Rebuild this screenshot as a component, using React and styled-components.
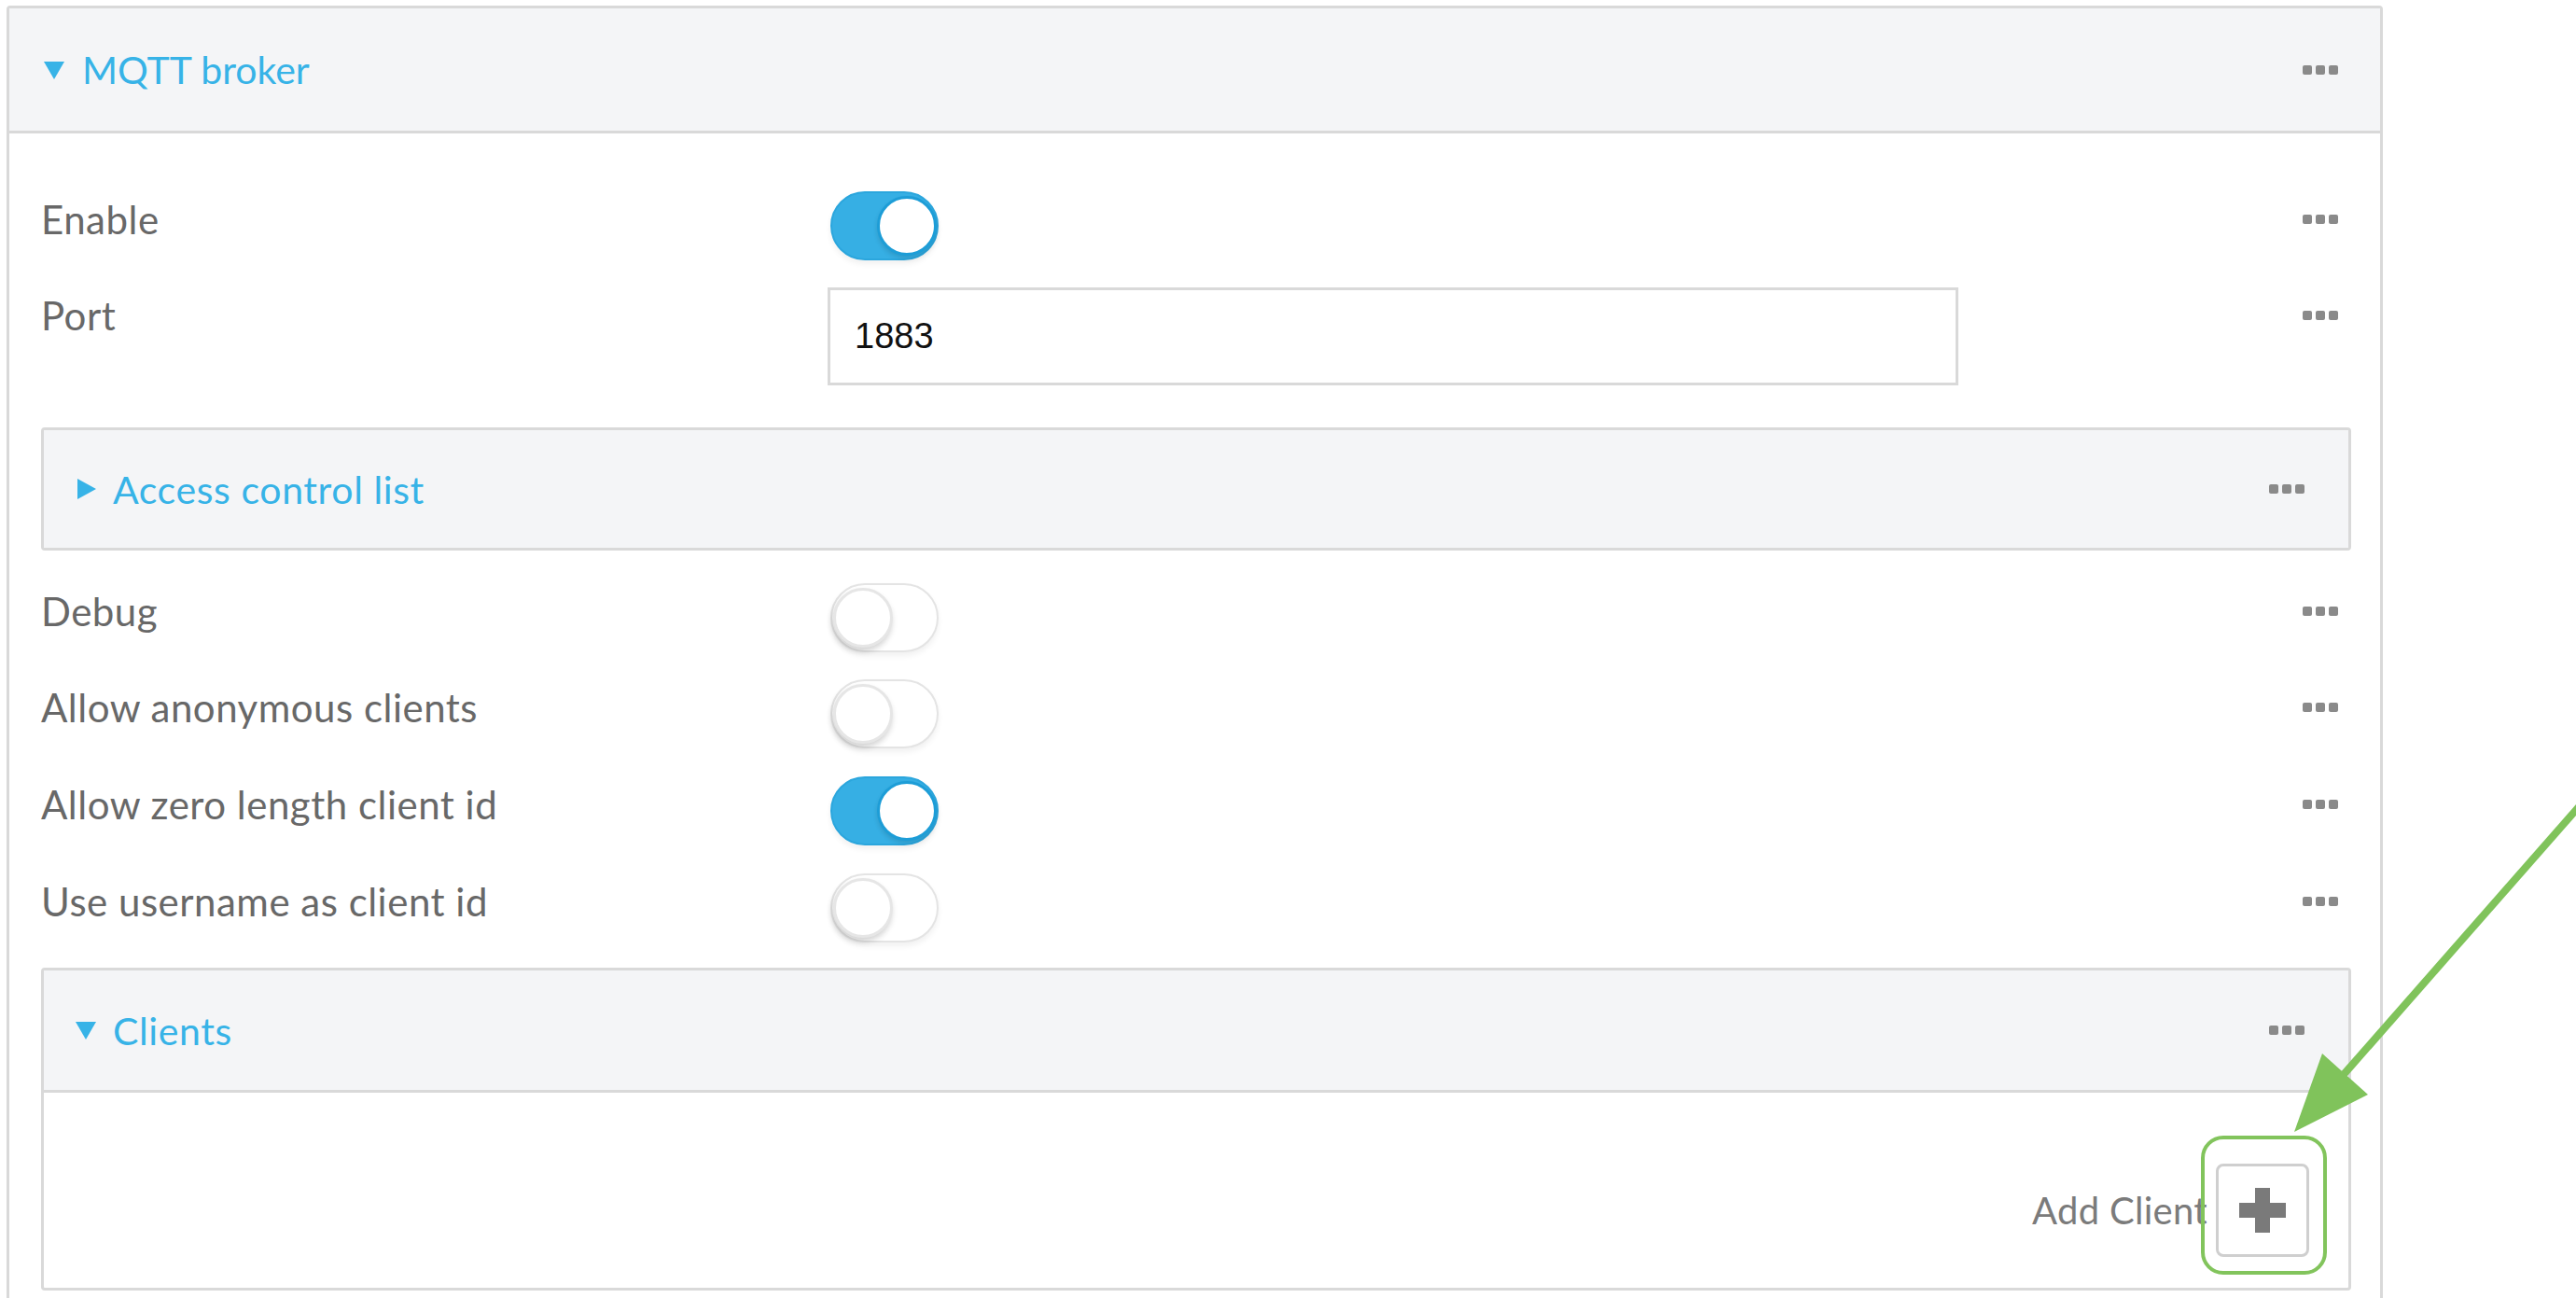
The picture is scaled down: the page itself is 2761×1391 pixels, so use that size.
import styled, { createGlobalStyle } from 'styled-components'

const GlobalStyle = createGlobalStyle`
  html, body {
    margin: 0;
    padding: 0;
    overflow: hidden;
    background: #ffffff;
    font-family: Lato, "Open Sans", sans-serif;
  }
`

const Page = styled.div`
  position: relative;
  width: 2761px;
  height: 1391px;
  padding: 6px 0 0 7px;
  box-sizing: border-box;
`

const Panel = styled.section`
  width: 2547px;
  box-sizing: border-box;
  border: 3px solid #d9d9d9;
  border-radius: 4px;
  background: #ffffff;
`

const PanelHeader = styled.div`
  display: flex;
  align-items: center;
  height: 131px;
  padding: 0 45px 0 37px;
  background: #f4f5f7;
  border-bottom: 3px solid #d9d9d9;
`

const Title = styled.span`
  flex: 1;
  display: flex;
  align-items: center;
  font-size: 41px;
  letter-spacing: ${(p) => (p.$tight ? 0 : 0.6)}px;
  color: #37b3e7;
`

const Caret = styled.svg`
  width: 22px;
  height: 22px;
  margin-right: ${(p) => p.$gap || 19}px;
  fill: #37b3e7;
  flex-shrink: 0;
`

const Body = styled.div`
  display: flex;
  flex-direction: column;
  padding: 62px 31px 60px 34px;
`

const Row = styled.div`
  display: flex;
  align-items: flex-start;
  padding-right: 14px;
  margin-top: ${(p) => p.$mt || 0}px;
`

const Label = styled.div`
  width: 843px;
  flex-shrink: 0;
  padding-top: 6px;
  font-size: 42px;
  letter-spacing: 0.5px;
  line-height: 48px;
  color: #686868;
`

const Control = styled.div`
  flex: 1;
`

const KebabWrap = styled.div`
  display: flex;
  align-items: center;
  gap: 4px;
  height: 48px;
  margin-top: ${(p) => (p.$inline ? 0 : 6)}px;
`

const Dot = styled.span`
  width: 10px;
  height: 10px;
  border-radius: 2px;
  background: #8a8a8a;
`

const Track = styled.div`
  position: relative;
  width: 116px;
  height: 74px;
  box-sizing: border-box;
  border-radius: 37px;
  margin-left: 3px;
  background: ${(p) => (p.$on ? '#36afe4' : '#ffffff')};
  border: 2px solid ${(p) => (p.$on ? '#2ba6dd' : '#e4e4e4')};
  box-shadow: 0 4px 6px rgba(0, 0, 0, 0.06);
`

const Knob = styled.div`
  position: absolute;
  top: 3px;
  left: ${(p) => (p.$on ? '48px' : '1px')};
  width: 64px;
  height: 64px;
  box-sizing: border-box;
  border-radius: 50%;
  background: #ffffff;
  border: 3px solid ${(p) => (p.$on ? '#1d9dd7' : '#e6e6e6')};
  box-shadow: ${(p) => (p.$on ? '0 3px 5px rgba(0,0,0,0.12)' : '-1px 4px 6px rgba(0,0,0,0.18)')};
`

const TextInput = styled.input`
  display: block;
  width: 1212px;
  height: 105px;
  box-sizing: border-box;
  border: 3px solid #d9d9d9;
  padding: 0 0 0 26px;
  font-family: "Liberation Sans", Arial, sans-serif;
  font-size: 38px;
  color: #111111;
  outline: none;
`

const SubPanel = styled.div`
  border: 3px solid #d9d9d9;
  border-radius: 4px;
  margin-top: ${(p) => p.$mt || 0}px;
  background: #ffffff;
`

const SubHeader = styled.div`
  display: flex;
  align-items: center;
  height: ${(p) => (p.$open ? 131 : 126)}px;
  box-sizing: border-box;
  padding: 0 47px 0 34px;
  background: #f4f5f7;
  border-bottom: ${(p) => (p.$open ? '3px solid #d9d9d9' : 'none')};
`

const SubBody = styled.div`
  display: flex;
  justify-content: flex-end;
  align-items: center;
  gap: 9px;
  padding: 76px 42px 33px 0;
`

const AddLabel = styled.span`
  font-size: 40px;
  letter-spacing: 0.3px;
  color: #7b7b7b;
`

const AddButton = styled.button`
  position: relative;
  display: flex;
  align-items: center;
  justify-content: center;
  width: 100px;
  height: 100px;
  padding: 0;
  box-sizing: border-box;
  border: 3px solid #cfcfcf;
  border-radius: 8px;
  background: #ffffff;
  cursor: pointer;
`

const Highlight = styled.span`
  position: absolute;
  top: -33px;
  left: -19px;
  right: -22px;
  bottom: -22px;
  border: 4px solid #82c45c;
  border-radius: 24px;
  pointer-events: none;
`

const Annotation = styled.svg`
  position: absolute;
  top: 0;
  left: 0;
  width: 2761px;
  height: 1391px;
  pointer-events: none;
`

function Kebab({ inline }) {
  return (
    <KebabWrap $inline={inline}>
      <Dot />
      <Dot />
      <Dot />
    </KebabWrap>
  )
}

function Down({ gap }) {
  return (
    <Caret viewBox="0 0 22 22" $gap={gap}>
      <polygon points="0,2 22,2 11,21" />
    </Caret>
  )
}

function Right({ gap }) {
  return (
    <Caret viewBox="0 0 22 22" $gap={gap}>
      <polygon points="2,0 22,11 2,22" />
    </Caret>
  )
}

function Toggle({ on }) {
  return (
    <Track $on={on}>
      <Knob $on={on} />
    </Track>
  )
}

function ToggleRow({ label, on, mt }) {
  return (
    <Row $mt={mt}>
      <Label>{label}</Label>
      <Control>
        <Toggle on={on} />
      </Control>
      <Kebab />
    </Row>
  )
}

export default function App() {
  return (
    <>
      <GlobalStyle />
      <Page>
        <Panel>
          <PanelHeader>
            <Title $tight>
              <Down gap={19} />
              MQTT broker
            </Title>
            <Kebab inline />
          </PanelHeader>
          <Body>
            <ToggleRow label="Enable" on />
            <Row $mt={29}>
              <Label>Port</Label>
              <Control>
                <TextInput defaultValue="1883" />
              </Control>
              <Kebab />
            </Row>
            <SubPanel $mt={45}>
              <SubHeader>
                <Title>
                  <Right gap={18} />
                  Access control list
                </Title>
                <Kebab inline />
              </SubHeader>
            </SubPanel>
            <ToggleRow label="Debug" mt={35} />
            <ToggleRow label="Allow anonymous clients" mt={29} />
            <ToggleRow label="Allow zero length client id" on mt={30} />
            <ToggleRow label="Use username as client id" mt={30} />
            <SubPanel $mt={27}>
              <SubHeader $open>
                <Title>
                  <Down gap={18} />
                  Clients
                </Title>
                <Kebab inline />
              </SubHeader>
              <SubBody>
                <AddLabel>Add Client</AddLabel>
                <AddButton aria-label="Add Client">
                  <svg width="50" height="48" viewBox="0 0 50 48">
                    <rect x="0" y="16" width="50" height="16" fill="#7a7a7a" />
                    <rect x="17" y="0" width="16" height="48" fill="#7a7a7a" />
                  </svg>
                  <Highlight />
                </AddButton>
              </SubBody>
            </SubPanel>
          </Body>
        </Panel>
        <Annotation viewBox="0 0 2761 1391">
          <line x1="2775" y1="852" x2="2508" y2="1156" stroke="#80c35b" strokeWidth="8" />
          <polygon points="2459,1213 2489,1129 2538,1173" fill="#80c35b" />
        </Annotation>
      </Page>
    </>
  )
}
